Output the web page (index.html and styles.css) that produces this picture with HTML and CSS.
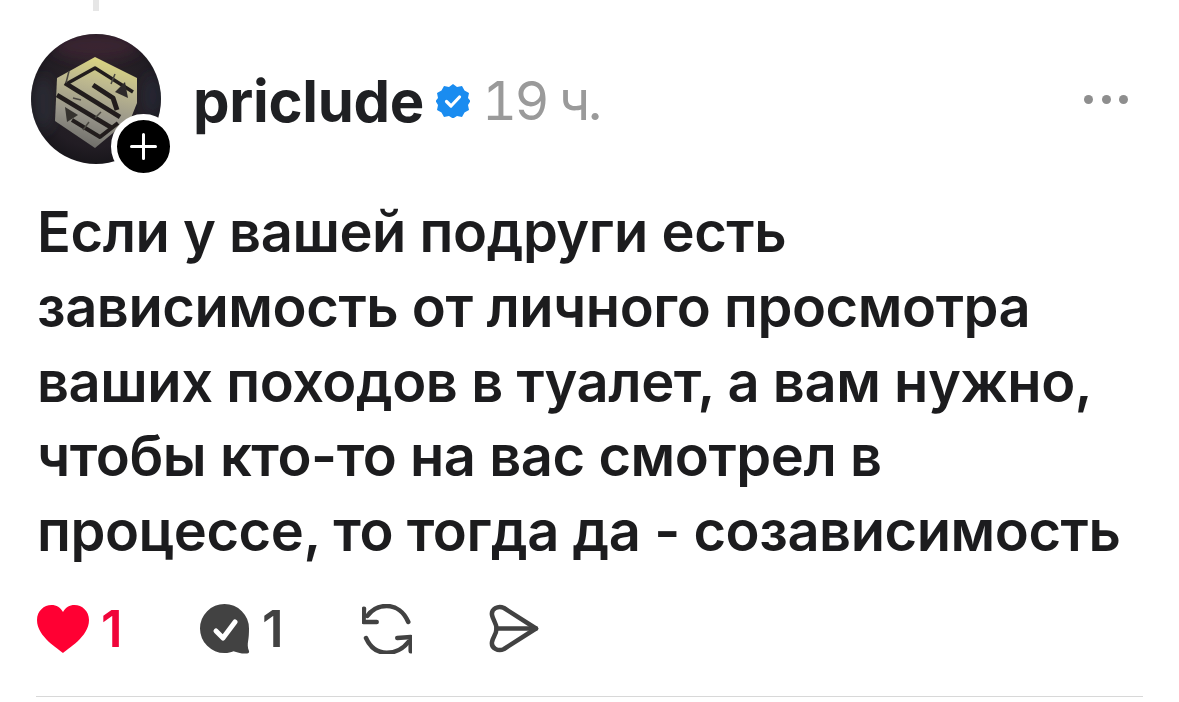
FILE: index.html
```html
<!DOCTYPE html>
<html lang="ru">
<head>
<meta charset="utf-8">
<title>priclude</title>
<link rel="stylesheet" href="styles.css">
</head>
<body>
<main class="post">
  <div class="thread-stub"></div>
  <header class="head">
    <div class="avatar">
      <svg class="avatar-img" viewBox="0 0 130 130" width="130" height="130">
        <defs>
          <radialGradient id="bg" cx="50%" cy="45%" r="60%">
            <stop offset="0" stop-color="#2a2426"/>
            <stop offset=".7" stop-color="#221d24"/>
            <stop offset="1" stop-color="#141317"/>
          </radialGradient>
          <linearGradient id="stone" x1=".6" y1="0" x2=".4" y2="1">
            <stop offset="0" stop-color="#dcd780"/>
            <stop offset=".3" stop-color="#bdb88f"/>
            <stop offset=".65" stop-color="#98958a"/>
            <stop offset="1" stop-color="#6d6c68"/>
          </linearGradient>
          <filter id="soft"><feGaussianBlur stdDeviation=".6"/></filter>
          <filter id="haze"><feGaussianBlur stdDeviation="7"/></filter>
          <clipPath id="round"><circle cx="65" cy="65" r="65"/></clipPath>
        </defs>
        <circle cx="65" cy="65" r="65" fill="url(#bg)"/>
        <g clip-path="url(#round)">
          <g filter="url(#haze)">
            <ellipse cx="65" cy="12" rx="44" ry="14" fill="#4a2a3c" opacity=".55"/>
            <ellipse cx="12" cy="70" rx="11" ry="28" fill="#323844" opacity=".5"/>
            <ellipse cx="122" cy="62" rx="10" ry="22" fill="#2e3442" opacity=".5"/>
          </g>
          <g filter="url(#soft)">
            <path d="M64 23 L106 44 L106 69 L100 84 L64 114 L24 87 L26 44 Z" fill="url(#stone)"/>
            <g fill="none" stroke="#201e1c" stroke-linejoin="round">
              <path d="M37 49 L64 34 L102 58" stroke-width="3.500"/>
              <path d="M34 49 L89 83" stroke-width="4.500"/>
              <path d="M26 61 L81 94" stroke-width="4.500"/>
              <path d="M62 51 L82 64 L86 76" stroke-width="5"/>
              <path d="M41 86 L69 103 L87 89" stroke-width="4"/>
              <path d="M38 37 L35 49 M84 40 L80 50 M50 66 L42 64 M64 84 L70 78 M52 96 L58 88" stroke-width="1.500" stroke="#4a4740"/>
            </g>
            <path d="M84 58 L94 48 L97 64 Z" fill="#2f2c2a"/>
            <path d="M34 73 L47 81 L36 88 Z" fill="#35332f"/>
          </g>
        </g>
      </svg>
      <span class="follow">
        <svg viewBox="0 0 27 27" width="27" height="27"><path d="M13.500 1.500V25.500M1.500 13.500H25.500" fill="none" stroke="#fff" stroke-width="3" stroke-linecap="round"/></svg>
      </span>
    </div>
    <div class="meta">
      <span class="name">priclude</span>
      <svg class="verified" viewBox="0 0 34 34" width="34" height="34">
        <path d="M17 0l4 3 5-1 2.500 4.500 4.500 2.500-1 5 2.500 3-2.500 4 1 5-4.500 2.500-2.500 4.500-5-1-4 2.500-4-2.500-5 1-2.500-4.500-4.500-2.500 1-5-2.500-4 2.500-3-1-5 4.500-2.500 2.500-4.500 5 1z" fill="#1a8cf0"/>
        <path d="M10.500 17.500l4.500 4.500 8.500-9" fill="none" stroke="#fff" stroke-width="3.200" stroke-linecap="round" stroke-linejoin="round"/>
      </svg>
      <span class="time">19 ч.</span>
    </div>
    <div class="more"><i></i><i></i><i></i></div>
  </header>
  <p class="text">Если у вашей подруги есть<br>зависимость от личного просмотра<br>ваших походов в туалет, а вам нужно,<br>чтобы кто-то на вас смотрел в<br>процессе, то тогда да - созависимость</p>
  <footer class="actions">
    <div class="act act-like">
      <svg viewBox="0 0 52 48" width="52" height="48"><path d="M26 48C22 44 0 32 0 15 0 6 7 0 14.500 0 19.500 0 23.500 2.500 26 7 28.500 2.500 32.500 0 37.500 0 45 0 52 6 52 15 52 32 30 44 26 48z" fill="#ff0033"/></svg>
      <span class="count like">1</span>
    </div>
    <div class="act act-reply">
      <svg viewBox="0 0 50 50" width="50" height="50"><path d="M24.500 0a24.500 24.500 0 1 0 0 49c3.500 0 6.500-.8 9-1.800 3.500 1.300 8 2.600 13.500 2.300 1.500 0 2.500-1 2-2.500-1.500-3.500-1.500-7-.8-10.500.6-3.500.8-7.500.8-12A24.500 24.500 0 0 0 24.500 0z" fill="#424242"/><path d="M16 27l7 7 12-16" fill="none" stroke="#fff" stroke-width="5" stroke-linecap="round" stroke-linejoin="round"/></svg>
      <span class="count">1</span>
    </div>
    <div class="act act-repost">
      <svg viewBox="0 0 50 50" width="50" height="50" fill="none" stroke="#424242" stroke-width="4.500" stroke-linecap="round" stroke-linejoin="round"><path d="M46.300 18C42 8 34 2 24.700 2 16 2 9.500 6 5.300 12"/><path d="M2 4.700 1.500 18H14.700"/><path d="M4 34c4 9 11 14.700 20.700 14.700 9.300 0 17-4.700 21.600-10.700"/><path d="M35.300 34 48.700 33V47.300"/></svg>
    </div>
    <div class="act">
      <svg viewBox="0 0 50 50" width="50" height="50" fill="none" stroke="#424242" stroke-width="4.500" stroke-linecap="round" stroke-linejoin="round"><path d="M47 24.500 15 4C9 1 2 5 3 11 4 16 7.500 19 7.500 24.500 7.500 30 4 33 3 38 2 44 9 48 15 45z"/><path d="M7.500 24.500H47"/></svg>
    </div>
  </footer>
  <hr class="rule">
</main>
</body>
</html>
```
FILE: styles.css
```css
* { box-sizing: border-box; }
html, body { margin: 0; padding: 0; background: #fff; }
body { width: 1179px; height: 702px; overflow: hidden; font-family: Inter, "Noto Sans", sans-serif; }
.post { padding: 0 36px 0 30px; }
.thread-stub { width: 6px; height: 11px; margin-left: 63px; background: #e6e6e6; }
.head { display: flex; align-items: center; margin-top: 23px; height: 130px; position: relative; }
.avatar { position: relative; width: 130px; height: 130px; flex: none; margin-left: 1px; }
.avatar-img { display: block; }
.follow {
  position: absolute; left: 80px; top: 80px; width: 65px; height: 65px; border-radius: 50%;
  background: #000; border: 6px solid #fff; display: flex; align-items: center; justify-content: center;
}
.meta { display: flex; align-items: center; margin-left: 32px; margin-top: 4px; }
.name { font-size: 58px; font-weight: 700; color: #1f2023; letter-spacing: -0.3px; line-height: 60px; }
.verified { margin-left: 12px; flex: none; }
.time { font-size: 54px; color: #9a9a9a; margin-left: 12px; line-height: 60px; font-variant-numeric: tabular-nums; letter-spacing: -2.500px; }
.more { margin-left: auto; margin-right: 15px; margin-top: 0; display: flex; gap: 8.500px; }
.more i { width: 9px; height: 9px; border-radius: 50%; background: #8e8e8e; }
.text {
  margin: 31px 0 0 7px; font-size: 56px; font-weight: 570; line-height: 74.750px; color: #1c1c1e; white-space: nowrap; letter-spacing: -0.450px;
}
.actions { display: flex; align-items: center; margin: 35px 0 0 7px; }
.act { display: flex; align-items: center; }
.count { font-size: 51px; font-weight: 600; color: #424242; margin-left: 12px; line-height: 50px; }
.count.like { color: #f0053a; }
.act-like { width: 163px; }
.act-reply { width: 162px; }
.act-repost { width: 127px; }
.rule { border: 0; height: 1px; background: #d8d8d8; margin: 42px 0 0 6px; }
```
